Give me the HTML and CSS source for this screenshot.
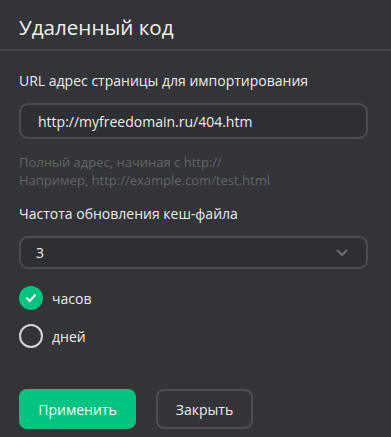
FILE: index.html
```html
<!DOCTYPE html>
<html lang="ru">
<head>
<meta charset="utf-8">
<link rel="stylesheet" href="styles.css">
</head>
<body>
<div class="dialog">
  <div class="header">Удаленный код</div>
  <div class="content">
    <div class="label">URL адрес страницы для импортирования</div>
    <div class="input">http://myfreedomain.ru/404.htm</div>
    <div class="hint">Полный адрес, начиная с http://<br>Например, http://example.com/test.html</div>
    <div class="label label2">Частота обновления кеш-файла</div>
    <div class="select">
      <span>3</span>
      <svg class="chev" width="12" height="8" viewBox="0 0 12 8"><path d="M1.5 1.5 L6 6 L10.5 1.5" fill="none" stroke="#6c6d72" stroke-width="2" stroke-linecap="round" stroke-linejoin="round"/></svg>
    </div>
    <div class="radios">
      <div class="radio">
        <span class="dot checked"><svg width="12" height="10" viewBox="0 0 12 10"><path d="M2 5.2 L4.8 8 L10 2.2" fill="none" stroke="#fff" stroke-width="2.2" stroke-linecap="round" stroke-linejoin="round"/></svg></span>
        <span>часов</span>
      </div>
      <div class="radio">
        <span class="dot"></span>
        <span>дней</span>
      </div>
    </div>
    <div class="buttons">
      <div class="btn primary">Применить</div>
      <div class="btn secondary">Закрыть</div>
    </div>
  </div>
</div>
</body>
</html>
```
FILE: styles.css
```css
html, body {
  margin: 0;
  padding: 0;
  background: #333438;
}
body {
  font-family: "Open Sans", "Noto Sans", sans-serif;
  color: #ececec;
  width: 391px;
  height: 437px;
  overflow: hidden;
}
.header {
  height: 51px;
  box-sizing: border-box;
  padding: 13px 19px 0;
  font-size: 20.6px;
  line-height: 28px;
  color: #f2f2f2;
  border-bottom: 2px solid #45464a;
}
.content {
  padding: 20px 23px 0 19px;
}
.label {
  font-size: 14px;
  line-height: 20px;
  color: #ececec;
}
.label2 {
  margin-top: 15px;
}
.input {
  margin-top: 12px;
  height: 36px;
  box-sizing: border-box;
  border: 2px solid #4b4c50;
  border-radius: 9px;
  background: #2e2f33;
  padding: 0 17px;
  display: flex;
  align-items: center;
  font-size: 14px;
  color: #ececec;
}
.hint {
  margin-top: 14px;
  font-size: 13px;
  line-height: 18px;
  color: #64656a;
}
.select {
  margin-top: 12px;
  height: 33px;
  box-sizing: border-box;
  border: 2px solid #4b4c50;
  border-radius: 9px;
  background: #2e2f33;
  padding: 0 18px 0 15px;
  display: flex;
  align-items: center;
  justify-content: space-between;
  font-size: 14px;
}
.radios {
  margin-top: 17px;
  display: flex;
  flex-direction: column;
  gap: 14px;
}
.radio {
  display: flex;
  align-items: center;
  gap: 9px;
  font-size: 14px;
  height: 24px;
}
.dot {
  width: 24px;
  height: 24px;
  box-sizing: border-box;
  border: 2px solid #d6d6d8;
  border-radius: 50%;
  display: flex;
  align-items: center;
  justify-content: center;
}
.dot.checked {
  background: #00c47f;
  border-color: #00c47f;
}
.buttons {
  margin-top: 41px;
  display: flex;
  gap: 20px;
}
.btn {
  height: 40px;
  box-sizing: border-box;
  border-radius: 8px;
  display: flex;
  align-items: center;
  justify-content: center;
  font-size: 14px;
}
.primary {
  width: 117px;
  background: #00c47f;
  color: #f4fff9;
}
.secondary {
  width: 97px;
  border: 2px solid #4d4e52;
  color: #ececec;
}
```
